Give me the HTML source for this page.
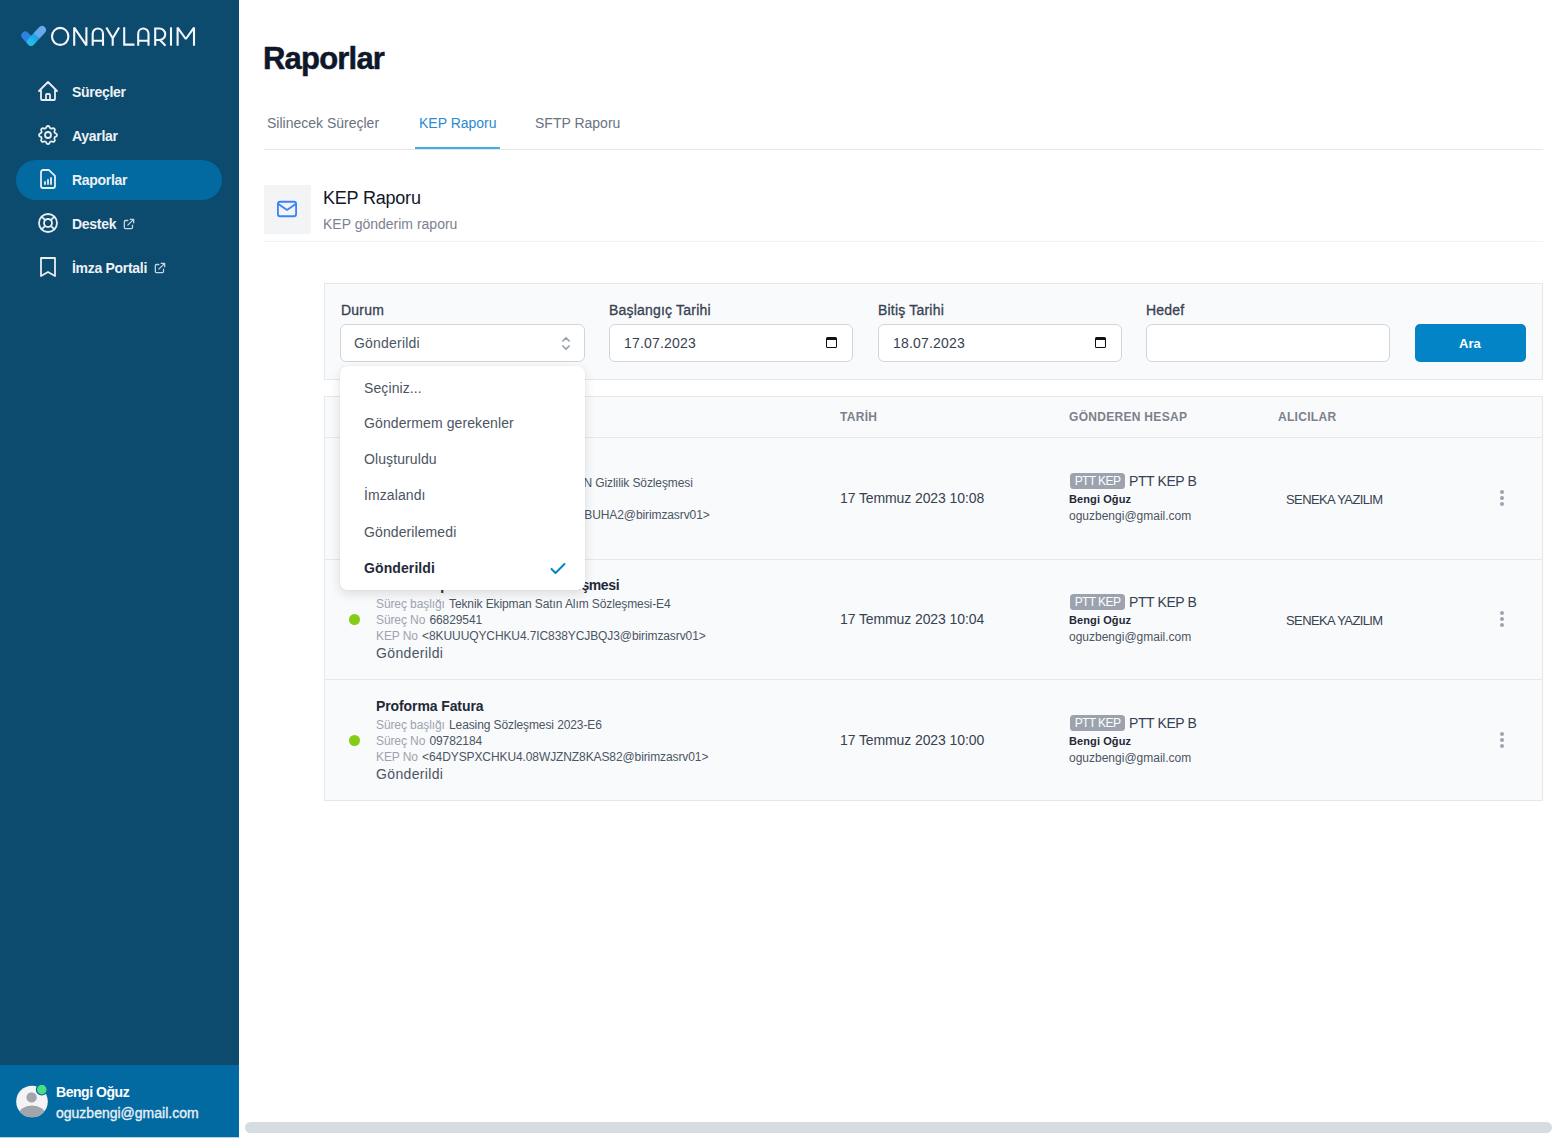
<!DOCTYPE html>
<html><head><meta charset="utf-8">
<style>
*{box-sizing:border-box;margin:0;padding:0}
html,body{width:1566px;height:1138px;overflow:hidden;background:#fff;font-family:"Liberation Sans",sans-serif;color:#111827}
.abs{position:absolute}
#side{position:absolute;left:0;top:0;width:239px;height:1138px;background:#0c4a6e}
#user{position:absolute;left:0;top:1065px;width:239px;height:72px;background:#0369a1}
#sbot{position:absolute;left:0;top:1137px;width:239px;height:1px;background:#b9d3e4}
.nav{position:absolute;left:16px;width:206px;height:40px;border-radius:20px}
.nav.active{background:#0369a1}
.nav>svg{position:absolute;left:20px;top:7px}
.nav span{position:absolute;left:56px;top:12px;font-size:14px;font-weight:bold;color:#eef2f6;white-space:nowrap;letter-spacing:-0.3px}
#main{position:absolute;left:0;top:0;width:1566px;height:1138px}
.t{position:absolute;white-space:nowrap}
.lab{font-size:14px;color:#374151;font-weight:normal;-webkit-text-stroke:0.3px #374151;letter-spacing:0.2px}
.inp{position:absolute;top:324px;height:38px;background:#fff;border:1px solid #d1d5db;border-radius:6px}
.inp .t{font-size:14px;letter-spacing:0.2px}
.cal{position:absolute;top:12px;width:11px;height:11px;border:1.5px solid #111;border-top-width:3px;border-radius:1.5px}
.th{font-size:12px;font-weight:bold;color:#7b818c;letter-spacing:0.3px}
.ttl{font-size:14px;font-weight:bold;color:#1f2937;letter-spacing:-0.1px}
.sm{font-size:12px;color:#9ca3af;letter-spacing:-0.1px}
.sm b{font-weight:normal;color:#4b5563;margin-left:1px}
.st{font-size:14px;color:#4b5563;letter-spacing:0.35px}
.dot{position:absolute;width:11px;height:11px;border-radius:50%;background:#84cc16}
.dt{font-size:14px;color:#374151;letter-spacing:-0.1px}
.badge{position:absolute;height:16px;width:55px;background:#9ca3af;border-radius:3.5px;color:#fff;font-size:12px;line-height:17px;text-align:center;letter-spacing:-0.6px}
.acc{font-size:14px;color:#374151;letter-spacing:-0.4px}
.nm{font-size:11px;font-weight:bold;color:#1f2937;letter-spacing:0.1px}
.em{font-size:12px;color:#4b5563;letter-spacing:0px}
.rc{font-size:13px;color:#374151;letter-spacing:-0.6px}
.keb{position:absolute;width:4px;height:4px;border-radius:50%;background:#9ca3af}
#dd{position:absolute;left:340px;top:366px;width:245px;height:224px;background:#fff;border-radius:7px;box-shadow:0 4px 12px rgba(0,0,0,0.12),0 0 1px rgba(0,0,0,0.15)}
.opt{position:absolute;left:24px;font-size:14px;color:#4b5563;white-space:nowrap;letter-spacing:0.1px}

</style></head><body>
<div id="side">
  <!-- logo -->
  <svg class="abs" style="left:20px;top:24px" width="30" height="26" viewBox="0 0 30 26">
    <defs>
      <linearGradient id="g1" gradientUnits="userSpaceOnUse" x1="11" y1="17.8" x2="22" y2="6"><stop offset="0" stop-color="#22bde6"/><stop offset="0.5" stop-color="#1c9ee6"/><stop offset="0.52" stop-color="#62a8ee"/><stop offset="1" stop-color="#66abef"/></linearGradient>
    </defs>
    <path d="M5.3 11.5 L11 17.8" stroke="#2c82e2" stroke-width="8" stroke-linecap="round"/>
    <path d="M11 17.8 L22 6" stroke="url(#g1)" stroke-width="8" stroke-linecap="round"/>
  </svg>
  <svg class="abs" style="left:50px;top:26px" width="150" height="22" viewBox="0 0 150 22" fill="none" stroke="#f4f6f8" stroke-width="2.1" stroke-miterlimit="1.6">
    <ellipse cx="10.2" cy="10.4" rx="8.2" ry="8.5"/>
    <path d="M24.2 19.7 V1.6 L36.4 19.4 V1.3"/>
    <path d="M42.7 19.7 V7.6 A5.15 5.15 0 0 1 53 7.6 V19.7 M42.7 14.8 H53"/>
    <path d="M56.3 1.5 L62.7 12.2 L69.1 1.5 M62.7 12.2 V19.7"/>
    <path d="M74.2 1.3 V18.6 H84.5"/>
    <path d="M88.2 19.7 V7.6 A5.15 5.15 0 0 1 98.5 7.6 V19.7 M88.2 14.8 H98.5"/>
    <path d="M105.2 19.7 V2.5 H109.5 A5.75 5.75 0 0 1 109.5 14 H105.2 M110 14 L115.5 19.7"/>
    <path d="M121 1.3 V19.7"/>
    <path d="M127.6 19.7 V1.6 L135.8 13 L144 1.6 V19.7"/>
  </svg>

  <div class="nav" style="top:72px">
    <svg width="24" height="24" viewBox="0 0 24 24" fill="none" stroke="#e9edf1" stroke-width="1.8" stroke-linecap="round" stroke-linejoin="round"><path d="M3 12l2-2m0 0l7-7 7 7M5 10v10a1 1 0 001 1h3m10-11l2 2m-2-2v10a1 1 0 01-1 1h-3m-6 0a1 1 0 001-1v-4a1 1 0 011-1h2a1 1 0 011 1v4a1 1 0 001 1m-6 0h6"/></svg>
    <span>Süreçler</span>
  </div>
  <div class="nav" style="top:116px">
    <svg width="24" height="24" viewBox="0 0 24 24" fill="none" stroke="#e9edf1" stroke-width="1.8" stroke-linecap="round" stroke-linejoin="round"><path d="M10.325 4.317c.426-1.756 2.924-1.756 3.35 0a1.724 1.724 0 002.573 1.066c1.543-.94 3.31.826 2.37 2.37a1.724 1.724 0 001.065 2.572c1.756.426 1.756 2.924 0 3.35a1.724 1.724 0 00-1.066 2.573c.94 1.543-.826 3.31-2.37 2.37a1.724 1.724 0 00-2.572 1.065c-.426 1.756-2.924 1.756-3.35 0a1.724 1.724 0 00-2.573-1.066c-1.543.94-3.31-.826-2.37-2.37a1.724 1.724 0 00-1.065-2.572c-1.756-.426-1.756-2.924 0-3.35a1.724 1.724 0 001.066-2.573c-.94-1.543.826-3.31 2.37-2.37.996.608 2.296.07 2.572-1.065z"/><circle cx="12" cy="12" r="3"/></svg>
    <span>Ayarlar</span>
  </div>
  <div class="nav active" style="top:160px">
    <svg width="24" height="24" viewBox="0 0 24 24" fill="none" stroke="#e9edf1" stroke-width="1.8" stroke-linecap="round" stroke-linejoin="round"><path d="M9 17v-2m3 2v-4m3 4v-6M7 21h10a2 2 0 002-2V9.414a1 1 0 00-.293-.707l-5.414-5.414A1 1 0 0012.586 3H7a2 2 0 00-2 2v14a2 2 0 002 2z"/></svg>
    <span>Raporlar</span>
  </div>
  <div class="nav" style="top:204px">
    <svg width="24" height="24" viewBox="0 0 24 24" fill="none" stroke="#e9edf1" stroke-width="1.8" stroke-linecap="round" stroke-linejoin="round"><circle cx="12" cy="12" r="9"/><circle cx="12" cy="12" r="4"/><path d="M5.6 5.6l3.6 3.6M14.8 14.8l3.6 3.6M18.4 5.6l-3.6 3.6M9.2 14.8l-3.6 3.6"/></svg>
    <span>Destek <svg style="vertical-align:-2px;margin-left:2px" width="14" height="14" viewBox="0 0 24 24" fill="none" stroke="#cbd5e1" stroke-width="2.2" stroke-linecap="round" stroke-linejoin="round"><path d="M10 6H6a2 2 0 00-2 2v10a2 2 0 002 2h10a2 2 0 002-2v-4M14 4h6m0 0v6m0-6L10 14"/></svg></span>
  </div>
  <div class="nav" style="top:248px">
    <svg width="24" height="24" viewBox="0 0 24 24" fill="none" stroke="#e9edf1" stroke-width="1.8" stroke-linecap="round" stroke-linejoin="round"><path d="M5 3h14v18l-7-4-7 4V3z"/></svg>
    <span>İmza Portali <svg style="vertical-align:-2px;margin-left:2px" width="14" height="14" viewBox="0 0 24 24" fill="none" stroke="#cbd5e1" stroke-width="2.2" stroke-linecap="round" stroke-linejoin="round"><path d="M10 6H6a2 2 0 00-2 2v10a2 2 0 002 2h10a2 2 0 002-2v-4M14 4h6m0 0v6m0-6L10 14"/></svg></span>
  </div>

  <div id="sbot"></div>
  <div id="user">
    <svg class="abs" style="left:16px;top:20px" width="34" height="34" viewBox="0 0 34 34">
      <defs><clipPath id="cc"><circle cx="16" cy="16.5" r="15.8"/></clipPath></defs>
      <circle cx="16" cy="16.5" r="15.8" fill="#f4f4f6"/>
      <g clip-path="url(#cc)"><circle cx="15.6" cy="12.4" r="5.2" fill="#a3a5ad"/><ellipse cx="16" cy="29.5" rx="13.5" ry="9" fill="#a3a5ad"/></g>
      <circle cx="25.8" cy="4.6" r="5.4" fill="#4ade80" stroke="#0369a1" stroke-width="1.2"/>
    </svg>
    <div class="t" style="left:56px;top:19px;font-size:14px;font-weight:bold;color:#fff;letter-spacing:-0.45px">Bengi Oğuz</div>
    <div class="t" style="left:56px;top:40px;font-size:14px;font-weight:normal;color:#e6f0f7;letter-spacing:0px;-webkit-text-stroke:0.35px #e6f0f7">oguzbengi@gmail.com</div>
  </div>
</div>

<div id="main">
  <div class="t" style="left:263px;top:41px;font-size:31px;font-weight:bold;color:#0f172a;letter-spacing:-0.8px;-webkit-text-stroke:0.5px #0f172a">Raporlar</div>
  <!-- tabs -->
  <div class="t" style="left:267px;top:115px;font-size:14px;color:#6b7280;letter-spacing:0px">Silinecek Süreçler</div>
  <div class="t" style="left:419px;top:115px;font-size:14px;color:#2b8ad0;letter-spacing:0px">KEP Raporu</div>
  <div class="t" style="left:535px;top:115px;font-size:14px;color:#6b7280;letter-spacing:0px">SFTP Raporu</div>
  <div class="abs" style="left:264px;top:149px;width:1279px;height:1px;background:#e5e7eb"></div>
  <div class="abs" style="left:415px;top:147px;width:85px;height:2px;background:#42ade6"></div>
  <!-- section header -->
  <div class="abs" style="left:264px;top:185px;width:47px;height:49px;background:#f3f4f6"></div>
  <svg class="abs" style="left:276px;top:199px" width="22" height="20" viewBox="0 0 24 22" fill="none" stroke="#3b82f6" stroke-width="2" stroke-linecap="round" stroke-linejoin="round"><rect x="2" y="3" width="20" height="16" rx="2.5"/><path d="M2.5 5.5 L12 12 L21.5 5.5"/></svg>
  <div class="t" style="left:323px;top:188px;font-size:18px;color:#111827;letter-spacing:-0.2px">KEP Raporu</div>
  <div class="t" style="left:323px;top:216px;font-size:14px;color:#7b8190;letter-spacing:0px">KEP gönderim raporu</div>
  <div class="abs" style="left:264px;top:241px;width:1279px;height:1px;background:#f0f1f3"></div>

  <!-- filter panel -->
  <div class="abs" style="left:324px;top:283px;width:1219px;height:97px;background:#f9fafb;border:1px solid #e5e7eb"></div>
  <div class="t lab" style="left:341px;top:302px">Durum</div>
  <div class="t lab" style="left:609px;top:302px">Başlangıç Tarihi</div>
  <div class="t lab" style="left:878px;top:302px">Bitiş Tarihi</div>
  <div class="t lab" style="left:1146px;top:302px">Hedef</div>
  <div class="inp" style="left:340px;width:245px"><span class="t" style="left:13px;top:10px;color:#4b5563">Gönderildi</span>
    <svg class="abs" style="left:220px;top:11px" width="10" height="16" viewBox="0 0 10 16" fill="none" stroke="#9aa1ab" stroke-width="1.7" stroke-linecap="round" stroke-linejoin="round"><path d="M1.8 5 L5 1.8 L8.2 5 M1.8 10 L5 13.2 L8.2 10"/></svg></div>
  <div class="inp" style="left:609px;width:244px"><span class="t" style="left:14px;top:10px;color:#374151">17.07.2023</span><span class="cal" style="left:216px"></span></div>
  <div class="inp" style="left:878px;width:244px"><span class="t" style="left:14px;top:10px;color:#374151">18.07.2023</span><span class="cal" style="left:216px"></span></div>
  <div class="inp" style="left:1146px;width:244px"></div>
  <div class="abs" style="left:1415px;top:324px;width:111px;height:38px;background:#0284c7;border-radius:5px"></div>
  <div class="t" style="left:1459px;top:336px;font-size:13px;font-weight:bold;color:#fff">Ara</div>

  <!-- table -->
  <div class="abs" style="left:324px;top:396px;width:1219px;height:405px;background:#f9fafb;border:1px solid #e5e7eb"></div>
  <div class="abs" style="left:325px;top:437px;width:1217px;height:1px;background:#e5e7eb"></div>
  <div class="abs" style="left:325px;top:559px;width:1217px;height:1px;background:#e5e7eb"></div>
  <div class="abs" style="left:325px;top:679px;width:1217px;height:1px;background:#e5e7eb"></div>
  <div class="t th" style="left:840px;top:410px">TARİH</div>
  <div class="t th" style="left:1069px;top:410px">GÖNDEREN HESAP</div>
  <div class="t th" style="left:1278px;top:410px">ALICILAR</div>
<!--ROWS-->
  <div class="dot" style="left:349px;top:493px"></div>
  <div class="t ttl" style="left:376px;top:456px;">Gizlilik Sözleşmesi</div>
  <div class="t sm" style="left:376px;top:476px">Süreç başlığı <b>Tüm Personel ve ÇALIŞAN Gizlilik Sözleşmesi</b></div>
  <div class="t sm" style="left:376px;top:492px">Süreç No <b>00000000</b></div>
  <div class="t sm" style="left:376px;top:508px">KEP No <b>&lt;X1ABCDEFGHIJK.ABCDEF3BUHA2@birimzasrv01&gt;</b></div>
  <div class="t st" style="left:376px;top:524px">Gönderildi</div>
  <div class="t dt" style="left:840px;top:490px">17 Temmuz 2023 10:08</div>
  <div class="badge" style="left:1070px;top:473px">PTT KEP</div>
  <div class="t acc" style="left:1129px;top:473px">PTT KEP B</div>
  <div class="t nm" style="left:1069px;top:493px">Bengi Oğuz</div>
  <div class="t em" style="left:1069px;top:509px">oguzbengi@gmail.com</div>
  <div class="t rc" style="left:1286px;top:492px">SENEKA YAZILIM</div>
  <div class="keb" style="left:1500px;top:490px"></div><div class="keb" style="left:1500px;top:496px"></div><div class="keb" style="left:1500px;top:502px"></div>
  <div class="dot" style="left:349px;top:614px"></div>
  <div class="t ttl" style="left:376px;top:577px;letter-spacing:-0.4px">Teknik Ekipman Satın Alım Sözleşmesi</div>
  <div class="t sm" style="left:376px;top:597px">Süreç başlığı <b>Teknik Ekipman Satın Alım Sözleşmesi-E4</b></div>
  <div class="t sm" style="left:376px;top:613px">Süreç No <b>66829541</b></div>
  <div class="t sm" style="left:376px;top:629px">KEP No <b>&lt;8KUUUQYCHKU4.7IC838YCJBQJ3@birimzasrv01&gt;</b></div>
  <div class="t st" style="left:376px;top:645px">Gönderildi</div>
  <div class="t dt" style="left:840px;top:611px">17 Temmuz 2023 10:04</div>
  <div class="badge" style="left:1070px;top:594px">PTT KEP</div>
  <div class="t acc" style="left:1129px;top:594px">PTT KEP B</div>
  <div class="t nm" style="left:1069px;top:614px">Bengi Oğuz</div>
  <div class="t em" style="left:1069px;top:630px">oguzbengi@gmail.com</div>
  <div class="t rc" style="left:1286px;top:613px">SENEKA YAZILIM</div>
  <div class="keb" style="left:1500px;top:611px"></div><div class="keb" style="left:1500px;top:617px"></div><div class="keb" style="left:1500px;top:623px"></div>
  <div class="dot" style="left:349px;top:735px"></div>
  <div class="t ttl" style="left:376px;top:698px;">Proforma Fatura</div>
  <div class="t sm" style="left:376px;top:718px">Süreç başlığı <b>Leasing Sözleşmesi 2023-E6</b></div>
  <div class="t sm" style="left:376px;top:734px">Süreç No <b>09782184</b></div>
  <div class="t sm" style="left:376px;top:750px">KEP No <b>&lt;64DYSPXCHKU4.08WJZNZ8KAS82@birimzasrv01&gt;</b></div>
  <div class="t st" style="left:376px;top:766px">Gönderildi</div>
  <div class="t dt" style="left:840px;top:732px">17 Temmuz 2023 10:00</div>
  <div class="badge" style="left:1070px;top:715px">PTT KEP</div>
  <div class="t acc" style="left:1129px;top:715px">PTT KEP B</div>
  <div class="t nm" style="left:1069px;top:735px">Bengi Oğuz</div>
  <div class="t em" style="left:1069px;top:751px">oguzbengi@gmail.com</div>
  <div class="keb" style="left:1500px;top:732px"></div><div class="keb" style="left:1500px;top:738px"></div><div class="keb" style="left:1500px;top:744px"></div>
<!--/ROWS-->
  <div id="dd">
    <div class="opt" style="top:14px">Seçiniz...</div>
    <div class="opt" style="top:49px">Göndermem gerekenler</div>
    <div class="opt" style="top:85px">Oluşturuldu</div>
    <div class="opt" style="top:121px">İmzalandı</div>
    <div class="opt" style="top:158px">Gönderilemedi</div>
    <div class="opt" style="top:194px;font-weight:bold;color:#1f2937">Gönderildi</div>
    <svg class="abs" style="left:210px;top:196px" width="16" height="13" viewBox="0 0 16 13" fill="none" stroke="#0284c7" stroke-width="2" stroke-linecap="round" stroke-linejoin="round"><path d="M1.5 7 L5.5 11 L14.5 2"/></svg>
  </div>
</div>
<div class="abs" style="left:245px;top:1122px;width:1307px;height:11px;border-radius:6px;background:#d5dde2"></div>
</body></html>
